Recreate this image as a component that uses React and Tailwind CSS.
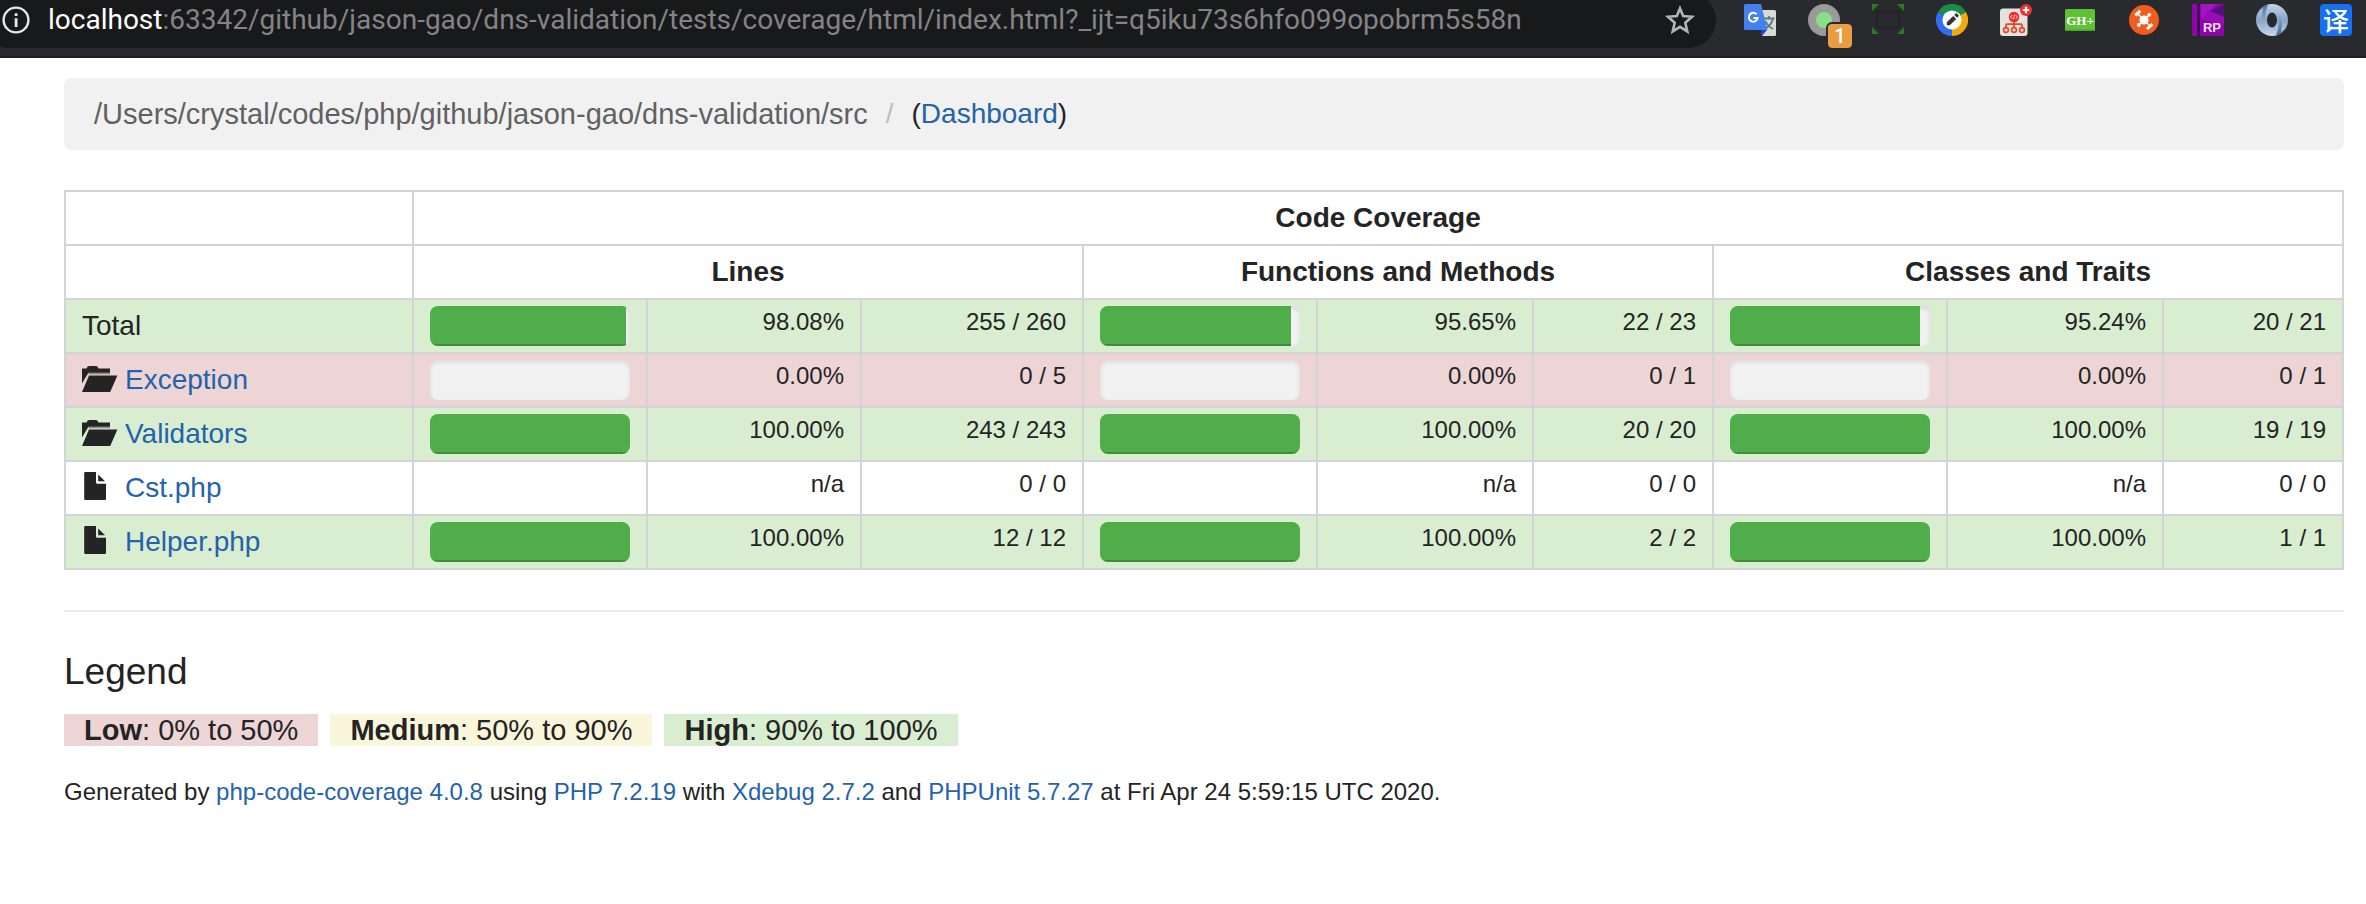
const LINK = 'text-[#2463ab] no-underline hover:underline';

const rows = [
  { name: 'Total', level: 'high', cells: [[98.08, '98.08%', '255 / 260'], [95.65, '95.65%', '22 / 23'], [95.24, '95.24%', '20 / 21']] },
  { name: 'Exception', icon: 'folder', level: 'low', cells: [[0, '0.00%', '0 / 5'], [0, '0.00%', '0 / 1'], [0, '0.00%', '0 / 1']] },
  { name: 'Validators', icon: 'folder', level: 'high', cells: [[100, '100.00%', '243 / 243'], [100, '100.00%', '20 / 20'], [100, '100.00%', '19 / 19']] },
  { name: 'Cst.php', icon: 'file', level: 'none', cells: [[null, 'n/a', '0 / 0'], [null, 'n/a', '0 / 0'], [null, 'n/a', '0 / 0']] },
  { name: 'Helper.php', icon: 'file', level: 'high', cells: [[100, '100.00%', '12 / 12'], [100, '100.00%', '2 / 2'], [100, '100.00%', '1 / 1']] },
];

const groups = ['Lines', 'Functions and Methods', 'Classes and Traits'];

const levelBg = { high: 'bg-[#d9edd0]', low: 'bg-[#edd5d6]', none: 'bg-white' };

const legend = [
  { label: 'Low', range: '0% to 50%', bg: 'bg-[#edd5d6]' },
  { label: 'Medium', range: '50% to 90%', bg: 'bg-[#faf6dc]' },
  { label: 'High', range: '90% to 100%', bg: 'bg-[#d9edd0]' },
];

function FolderIcon() {
  return (
    <svg className="h-8 w-9 shrink-0" viewBox="0 0 36 32" fill="#242424" aria-hidden="true">
      <path d="M0 4.4h4.6Q5.2 2 7.4 2h6.2q2.2 0 2.8 2.4H28v4.4H6.4L0 19.6z" />
      <path d="M6.4 9.6H28" stroke="#242424" strokeOpacity=".45" strokeWidth="1.4" />
      <path d="M7 11.6h28.4L28.2 28H0z" />
    </svg>
  );
}

function FileIcon() {
  return (
    <svg className="h-8 w-9 shrink-0" viewBox="0 0 36 32" fill="#242424" aria-hidden="true">
      <path d="M3.4 0H14v10.4q0 1.4 1.4 1.4H24v15q0 1.2-1.2 1.2H3.4q-1.2 0-1.2-1.2V1.2Q2.2 0 3.4 0z" />
      <path d="M16.2 2.4l6.8 6.8h-6.8z" />
    </svg>
  );
}

function Progress({ value, label }) {
  return (
    <div
      role="progressbar"
      aria-label={label}
      aria-valuenow={value}
      aria-valuemin={0}
      aria-valuemax={100}
      className="h-10 overflow-hidden rounded-lg bg-[#f1f1f1] shadow-[inset_0_2px_4px_rgba(0,0,0,0.1)]"
    >
      <div className="h-full bg-[#4fae4a] shadow-[inset_0_-2px_0_rgba(0,0,0,0.18)]" style={{ width: `${value}%` }} />
    </div>
  );
}

function InfoIcon() {
  return (
    <svg className="size-7" viewBox="0 0 28 28" aria-hidden="true">
      <circle cx="14" cy="14" r="12.4" fill="none" stroke="#e8e8e8" strokeWidth="2.4" />
      <path d="M12.7 7.2h2.8v2.8h-2.8zM12.7 12.2h2.8v8.8h-2.8z" fill="#e8e8e8" />
    </svg>
  );
}

function StarIcon() {
  return (
    <svg className="size-8" viewBox="0 0 32 32" aria-hidden="true">
      <path
        d="M16 4.4l3.2 7.6 8.8.8-6.700 5.900 2 8.700L16 22.800l-7.300 4.600 2-8.700L4 12.800l8.800-.8z"
        fill="none"
        stroke="#b4b4b6"
        strokeWidth="2.6"
      />
    </svg>
  );
}

function TranslateIcon() {
  return (
    <svg className="size-8" viewBox="0 0 32 32" aria-hidden="true">
      <path d="M14 6h16.500q1.500 0 1.500 1.500v23q0 1.500-1.500 1.500H18z" fill="#d9d9d9" />
      <path d="M19.500 14.500h11M25 12v2.500M21.500 24.500q6-3.500 7.500-10M21.500 17q2 5 7.500 8" fill="none" stroke="#587a85" strokeWidth="1.800" />
      <path d="M16.500 25.500h6.800L18 32z" fill="#2f3dc0" />
      <path d="M1.500 0H17l6.500 26H1.500Q0 26 0 24.500v-23Q0 0 1.500 0z" fill="#4480ee" />
      <path d="M12.600 10.400A4.400 4.400 0 1 0 13.600 14H9.400" fill="none" stroke="#fff" strokeWidth="2" />
    </svg>
  );
}

function CirclesIcon() {
  return (
    <svg className="size-8" viewBox="0 0 32 32" aria-hidden="true">
      <circle cx="16" cy="16" r="16" fill="#9a9a9a" />
      <circle cx="16" cy="16" r="8" fill="#8ade88" />
    </svg>
  );
}

function CornersIcon() {
  return (
    <svg className="size-8" viewBox="0 0 32 32" aria-hidden="true">
      <path d="M0 0h7L0 7zM32 0v7l-7-7zM0 30v-7l7 7zM32 30h-7l7-7z" fill="#2b7a22" />
      <rect x="5" y="7.5" width="22" height="16" rx="1.5" fill="none" stroke="#242529" strokeWidth="2.5" />
    </svg>
  );
}

function PencilIcon() {
  return (
    <svg className="size-8" viewBox="0 0 32 32" aria-hidden="true">
      <path d="M16 16L2.100 8A16 16 0 0 1 29.900 8z" fill="#188d45" />
      <path d="M16 16V32A16 16 0 0 1 2.100 8z" fill="#2f6df3" />
      <path d="M16 16L29.900 8A16 16 0 0 1 16 32z" fill="#f2a90c" />
      <circle cx="16" cy="16" r="9.6" fill="#fff" />
      <path d="M10.800 18.200l6.400-6.200 3 3-6.400 6.200H10.800zM18.200 11l1.600-1.500q.6-.5 1.200 0l1.500 1.500q.6.600 0 1.200L21 13.800z" fill="#343434" />
    </svg>
  );
}

function SitemapIcon() {
  return (
    <svg className="size-8" viewBox="0 0 32 32" aria-hidden="true">
      <rect x="0" y="4.5" width="27.5" height="27.5" rx="3" fill="#e2e2e0" />
      <circle cx="14" cy="13" r="5.2" fill="#ee2a24" />
      <path d="M12.400 11l-1.900 2 1.900 2M15.600 11l1.900 2-1.900 2M14.600 10.500l-1.200 5" fill="none" stroke="#fff" strokeWidth=".8" />
      <path d="M14 17v7M6 24v-3q0-.9.900-.9h14.200q.9 0 .9.900v3" fill="none" stroke="#ee4322" strokeWidth="1.7" />
      <g fill="#e9e6e4" stroke="#ee4322" strokeWidth="1.6">
        <circle cx="6" cy="26" r="2.4" />
        <circle cx="14" cy="26" r="2.4" />
        <circle cx="22" cy="26" r="2.4" />
      </g>
      <circle cx="26" cy="6" r="6" fill="#f42c2c" />
      <path d="M26 2.800v6.400M22.800 6h6.400" stroke="#fff" strokeWidth="2.2" />
    </svg>
  );
}

function GitHubPlusIcon() {
  return (
    <svg className="size-8" viewBox="0 0 32 32" aria-hidden="true">
      <rect x="1" y="5" width="30" height="22" rx="1.5" fill="#5fc136" />
      <rect x="1.5" y="25.5" width="29" height="1.5" fill="#4ca62a" />
      <text x="16" y="20.500" textAnchor="middle" fontSize="13" fontWeight="700" fill="#fff" className="font-['Liberation_Serif',serif]">
        GH+
      </text>
    </svg>
  );
}

function HubIcon() {
  return (
    <svg className="size-8" viewBox="0 0 32 32" aria-hidden="true">
      <circle cx="16" cy="16" r="15" fill="#f15d1e" />
      <circle cx="16" cy="16" r="4.6" fill="#fff" />
      <path d="M10 10l12.500 12.500M21 11l-10 10" stroke="#fff" strokeWidth="1.4" />
      <circle cx="21.2" cy="10.8" r="1.9" fill="#fff" />
      <circle cx="10.8" cy="21" r="1.9" fill="#fff" />
      <path d="M7.200 11.400l5.200-4.600M19 25l5.400-4.800" stroke="#fff" strokeWidth="3" />
    </svg>
  );
}

function RpIcon() {
  return (
    <svg className="size-8" viewBox="0 0 32 32" aria-hidden="true">
      <path d="M0 0h32v32H0z" fill="#8d06a6" />
      <path d="M9 0h16L9 15z" fill="#a414c4" />
      <path d="M32 0v13L18 7z" fill="#55107c" />
      <path d="M9 15l9-8 14 6v8z" fill="#9a0cba" />
      <path d="M5.500 0H8v32H5.500z" fill="#3d0550" />
      <text x="20" y="28" textAnchor="middle" fontSize="13" fontWeight="700" fill="#f7dcfb" className="font-['Liberation_Sans',sans-serif]">
        RP
      </text>
    </svg>
  );
}

function RingIcon() {
  return (
    <svg className="size-8" viewBox="0 0 32 32" aria-hidden="true">
      <defs>
        <linearGradient id="ringBase" x1="0" y1="0" x2="0" y2="1">
          <stop offset="0" stopColor="#c3d5e8" />
          <stop offset=".5" stopColor="#88a5c8" />
          <stop offset="1" stopColor="#c6d8ea" />
        </linearGradient>
        <linearGradient id="ringRight" x1="0" y1="0" x2="0" y2="1">
          <stop offset="0" stopColor="#9db6d3" />
          <stop offset="1" stopColor="#456894" />
        </linearGradient>
        <linearGradient id="ringLeft" x1="0" y1="0" x2="0" y2="1">
          <stop offset="0" stopColor="#4f719c" />
          <stop offset="1" stopColor="#a9c0da" />
        </linearGradient>
      </defs>
      <circle cx="16" cy="16" r="16" fill="url(#ringBase)" />
      <path d="M15 8C24 7 25 18 20 31.500A16 16 0 0 0 32 16C31 24 27 27 25 28 28 16 24 7 15 8z" fill="url(#ringRight)" />
      <path d="M17 24C8 25 7 14 12 .5A16 16 0 0 0 0 16C1 8 5 5 7 4 4 16 8 25 17 24z" fill="url(#ringLeft)" />
      <ellipse cx="16" cy="16" rx="5" ry="7.6" fill="#292a2e" />
    </svg>
  );
}

function DictionaryIcon() {
  return (
    <span className="flex size-8 items-center justify-center rounded-sm bg-[#1570f2] font-['Noto_Sans_CJK_SC',sans-serif] text-[26px] leading-8 font-medium text-white">
      译
    </span>
  );
}

const extensions = [
  ['Translate', TranslateIcon],
  ['Proxy', CirclesIcon, '1'],
  ['Capture', CornersIcon],
  ['Editor', PencilIcon],
  ['Code tree', SitemapIcon],
  ['GitHub plus', GitHubPlusIcon],
  ['Hub', HubIcon],
  ['RP', RpIcon],
  ['JSON', RingIcon],
  ['Dictionary', DictionaryIcon],
];

function BrowserBar() {
  return (
    <header className="flex h-[58px] items-start justify-between overflow-hidden border-b-2 border-[#211d20] bg-[#292a2e]">
      <div className="-mt-2 -ml-5 flex h-14 flex-1 items-center rounded-[28px] bg-[#18191b] pr-5 pl-[22px]">
        <button type="button" aria-label="Site information">
          <InfoIcon />
        </button>
        <p className="ml-[18px] flex-1 font-['Roboto',sans-serif] text-[28px] leading-10 whitespace-nowrap text-[#848486]">
          <span className="text-white">localhost</span>
          :63342/github/jason-gao/dns-validation/tests/coverage/html/index.html?_ijt=q5iku73s6hfo099opobrm5s58n
        </p>
        <button type="button" aria-label="Bookmark this page">
          <StarIcon />
        </button>
      </div>
      <div className="mt-1 mr-[14px] ml-7 flex gap-8">
        {extensions.map(([name, Icon, badge]) => (
          <button key={name} type="button" aria-label={name} className="relative size-8">
            <Icon />
            {badge && (
              <span className="absolute top-5 left-5 size-6 rounded-sm bg-[#e99c41] text-center font-['Roboto',sans-serif] text-xl leading-6 font-medium text-white outline-2 outline-[#292a2e]">
                {badge}
              </span>
            )}
          </button>
        ))}
      </div>
    </header>
  );
}

const CELL = 'border-2 border-[#d4d4d6] px-4 py-1.5';

function CoverageTable() {
  return (
    <table className="mt-10 w-full table-fixed border-collapse text-[28px] leading-10">
      <colgroup>
        <col className="w-[348px]" />
        <col className="w-[234px]" />
        <col className="w-[214px]" />
        <col className="w-[222px]" />
        <col className="w-[234px]" />
        <col className="w-[216px]" />
        <col className="w-[180px]" />
        <col className="w-[234px]" />
        <col className="w-[216px]" />
        <col className="w-[180px]" />
      </colgroup>
      <thead>
        <tr>
          <td className={CELL}>&nbsp;</td>
          <th colSpan={9} scope="colgroup" className={`${CELL} font-bold`}>Code Coverage</th>
        </tr>
        <tr>
          <td className={CELL}>&nbsp;</td>
          {groups.map((group) => (
            <th key={group} colSpan={3} scope="colgroup" className={`${CELL} font-bold`}>{group}</th>
          ))}
        </tr>
      </thead>
      <tbody>
        {rows.map((row) => (
          <tr key={row.name} className={levelBg[row.level]}>
            <th scope="row" className={`${CELL} text-left font-normal`}>
              {row.icon ? (
                <div className="flex items-center gap-[7px]">
                  {row.icon === 'folder' ? <FolderIcon /> : <FileIcon />}
                  <a href="#" className={LINK}>{row.name}</a>
                </div>
              ) : (
                row.name
              )}
            </th>
            {row.cells.map(([value, percent, count], i) => [
              <td key={`bar-${i}`} className={CELL}>
                {value !== null && <Progress value={value} label={`${row.name}: ${groups[i]}`} />}
              </td>,
              <td key={`percent-${i}`} className={`${CELL} text-right align-top text-2xl leading-8`}>{percent}</td>,
              <td key={`count-${i}`} className={`${CELL} text-right align-top text-2xl leading-8`}>{count}</td>,
            ])}
          </tr>
        ))}
      </tbody>
    </table>
  );
}

export default function App() {
  return (
    <div className="min-h-screen bg-white font-['Liberation_Sans',sans-serif] text-[#242424]">
      <BrowserBar />
      <main className="pt-5 pr-[22px] pl-16">
        <nav aria-label="Breadcrumb" className="rounded-lg bg-[#f1f1f1] px-[30px] py-4">
          <ol className="flex text-[28px] leading-10">
            <li className="text-[29px] text-[#616161]">/Users/crystal/codes/php/github/jason-gao/dns-validation/src</li>
            <li aria-hidden="true" className="px-[18px] text-[#bdbdbd]">/</li>
            <li>(<a href="#" className={LINK}>Dashboard</a>)</li>
          </ol>
        </nav>

        <CoverageTable />

        <footer className="mt-10 border-t-2 border-[#e9e9e9] pt-10">
          <h4 className="text-[37px] leading-10 font-medium">Legend</h4>
          <p className="mt-[22px] flex gap-3 text-[29px] leading-8">
            {legend.map(({ label, range, bg }) => (
              <span key={label} className={`${bg} px-5`}>
                <strong>{label}</strong>: {range}
              </span>
            ))}
          </p>
          <p className="mt-[30px] text-2xl leading-8">
            Generated by <a href="#" className={LINK}>php-code-coverage 4.0.8</a> using{' '}
            <a href="#" className={LINK}>PHP 7.2.19</a> with <a href="#" className={LINK}>Xdebug 2.7.2</a> and{' '}
            <a href="#" className={LINK}>PHPUnit 5.7.27</a> at Fri Apr 24 5:59:15 UTC 2020.
          </p>
        </footer>
      </main>
    </div>
  );
}
